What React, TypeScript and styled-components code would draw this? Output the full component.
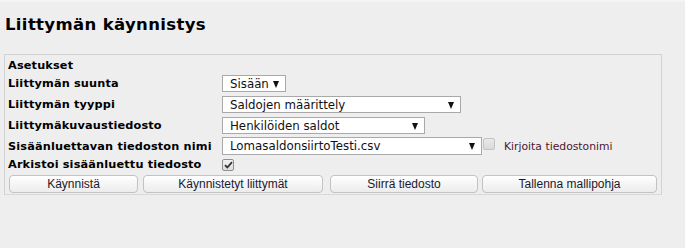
import React from "react";
import styled, { createGlobalStyle } from "styled-components";

const Global = createGlobalStyle`
  html, body { margin: 0; padding: 0; background: #eeeeee; }
  body { font-family: "DejaVu Sans", Verdana, sans-serif; color: #000; }
`;

const Page = styled.div`
  width: 685px;
  height: 248px;
  box-sizing: border-box;
  border-top: 2px solid #f4f4f4;
  padding: 0 24px 0 4px;
  background: #eeeeee;
`;

const Title = styled.h1`
  margin: 0;
  padding: 12px 0 0 1px;
  height: 42px;
  box-sizing: border-box;
  font-size: 16.5px;
  line-height: 22px;
  font-weight: bold;
  letter-spacing: 0.35px;
`;

const Fieldset = styled.div`
  margin-top: 10px;
  width: 658px;
  box-sizing: border-box;
  border: 1px solid #d2d2d2;
  border-bottom-color: #d8d8d8;
  padding: 2px 4px 0 3px;
`;

const Row = styled.div<{ $h: number }>`
  display: flex;
  align-items: center;
  height: ${(p) => p.$h}px;
`;

const Label = styled.div`
  width: 214px;
  flex: none;
  font-size: 11.3px;
  font-weight: bold;
  letter-spacing: 0.15px;
  white-space: nowrap;
`;

const Select = styled.div<{ $w: number; $h?: number }>`
  width: ${(p) => p.$w}px;
  height: ${(p) => p.$h ?? 17}px;
  box-sizing: border-box;
  border: 1px solid #a9a9a9;
  background: #fff;
  display: flex;
  align-items: center;
  justify-content: space-between;
  padding: 0 6px 0 7px;
  font-size: 11.8px;
  color: #111;
  white-space: nowrap;
`;

const Arrow = styled.span`
  width: 0;
  height: 0;
  border-left: 3.5px solid transparent;
  border-right: 3.5px solid transparent;
  border-top: 7px solid #111;
  margin-top: 1px;
`;

const Box = styled.span<{ $checked?: boolean }>`
  width: 12px;
  height: 12px;
  box-sizing: border-box;
  border: 1px solid ${(p) => (p.$checked ? "#8f8f8f" : "#c4c4c4")};
  border-radius: 2px;
  background: ${(p) => (p.$checked ? "linear-gradient(#f2f2f2, #dcdcdc)" : "linear-gradient(#e9e9e9, #dadada)")};
  display: inline-flex;
  align-items: center;
  justify-content: center;
  flex: none;
`;

const Hint = styled.span`
  margin-left: 9px;
  font-size: 10.8px;
  color: #4d1531;
  white-space: nowrap;
`;

const Buttons = styled.div`
  display: flex;
  gap: 5px;
  height: 21px;
  align-items: center;
  padding-left: 1px;
`;

const Button = styled.button<{ $w: number; $ml?: number }>`
  width: ${(p) => p.$w}px;
  margin-left: ${(p) => p.$ml ?? 0}px;
  height: 18px;
  box-sizing: border-box;
  border: 1px solid #c3c3c3;
  border-radius: 4px;
  background: linear-gradient(#ffffff, #ececec);
  font-family: "Liberation Sans", Arial, sans-serif;
  font-size: 12px;
  color: #1a1a2e;
  padding: 0;
  line-height: 16px;
`;

const Check = () => (
  <svg width="9" height="8" viewBox="0 0 9 8">
    <path d="M1 4.2 L3.3 6.5 L8 1.2" fill="none" stroke="#333" strokeWidth="1.8" />
  </svg>
);

export default function App() {
  return (
    <>
      <Global />
      <Page>
        <Title>Liittymän käynnistys</Title>
        <Fieldset>
          <Row $h={16}>
            <Label>Asetukset</Label>
          </Row>
          <Row $h={21}>
            <Label>Liittymän suunta</Label>
            <Select $w={64}>
              Sisään <Arrow />
            </Select>
          </Row>
          <Row $h={21}>
            <Label>Liittymän tyyppi</Label>
            <Select $w={239}>
              Saldojen määrittely <Arrow />
            </Select>
          </Row>
          <Row $h={21}>
            <Label>Liittymäkuvaustiedosto</Label>
            <Select $w={203}>
              Henkilöiden saldot <Arrow />
            </Select>
          </Row>
          <Row $h={20}>
            <Label>Sisäänluettavan tiedoston nimi</Label>
            <Select $w={260} $h={18}>
              LomasaldonsiirtoTesti.csv <Arrow />
            </Select>
            <Box style={{ marginLeft: 1, marginTop: -4 }} />
            <Hint>Kirjoita tiedostonimi</Hint>
          </Row>
          <Row $h={17}>
            <Label>Arkistoi sisäänluettu tiedosto</Label>
            <Box $checked>
              <Check />
            </Box>
          </Row>
          <Buttons>
            <Button $w={129}>Käynnistä</Button>
            <Button $w={180}>Käynnistetyt liittymät</Button>
            <Button $w={148} $ml={2}>Siirrä tiedosto</Button>
            <Button $w={175} $ml={-1}>Tallenna mallipohja</Button>
          </Buttons>
        </Fieldset>
      </Page>
    </>
  );
}
